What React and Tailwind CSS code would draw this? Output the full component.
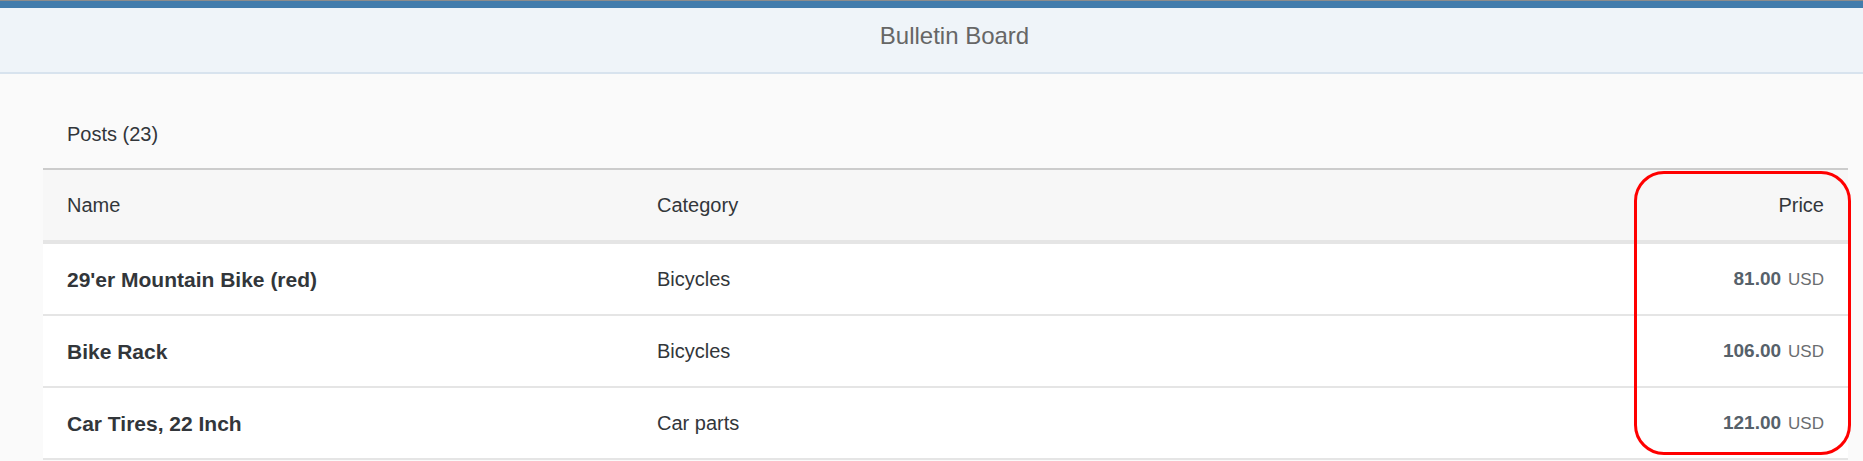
import React from "react";

const rows = [
  { name: "29'er Mountain Bike (red)", category: "Bicycles", price: "81.00" },
  { name: "Bike Rack", category: "Bicycles", price: "106.00" },
  { name: "Car Tires, 22 Inch", category: "Car parts", price: "121.00" },
];

export default function App() {
  return (
    <div className="w-[1863px] h-[461px] overflow-hidden bg-[#fafafa] font-['Liberation_Sans',Arial,sans-serif] text-[#32363a]">
      <div className="h-px bg-[#8c8c8c]" />
      <div className="h-[7px] bg-[#427cac]" />
      <div className="h-[66px] bg-[#eff4f9] border-b-2 border-[#d8e3ee] flex justify-center pt-[14px] pl-[46px]">
        <span className="text-[24px] leading-[28px] text-[#666666]">Bulletin Board</span>
      </div>
      <div className="ml-[43px] mr-[15px]">
        <div className="pt-[49px] pb-[22px] pl-6 text-[20px] leading-[23px]">Posts (23)</div>
        <div className="relative">
          <div className="grid grid-cols-[590px_1fr_auto] items-center px-6 h-[76px] bg-[#f7f7f7] border-t-2 border-b-4 border-t-[#cccccc] border-b-[#e5e5e5] text-[20px] leading-[23px]">
            <div>Name</div>
            <div>Category</div>
            <div className="text-right">Price</div>
          </div>
          {rows.map((r) => (
            <div
              key={r.name}
              className="grid grid-cols-[590px_1fr_auto] items-center px-6 h-[72px] bg-white border-b-2 border-[#e5e5e5] text-[20px] leading-[23px]"
            >
              <div className="font-bold text-[21px]">{r.name}</div>
              <div>{r.category}</div>
              <div className="text-right whitespace-nowrap">
                <span className="font-bold text-[19px] text-[#56616a]">{r.price}</span>
                <span className="ml-[7px] text-[17px] text-[#6a6d70]">USD</span>
              </div>
            </div>
          ))}
          <div className="absolute left-[1591px] top-[3px] w-[217px] h-[284px] rounded-[30px] border-[3px] border-[#ff0000] pointer-events-none" />
        </div>
      </div>
    </div>
  );
}
